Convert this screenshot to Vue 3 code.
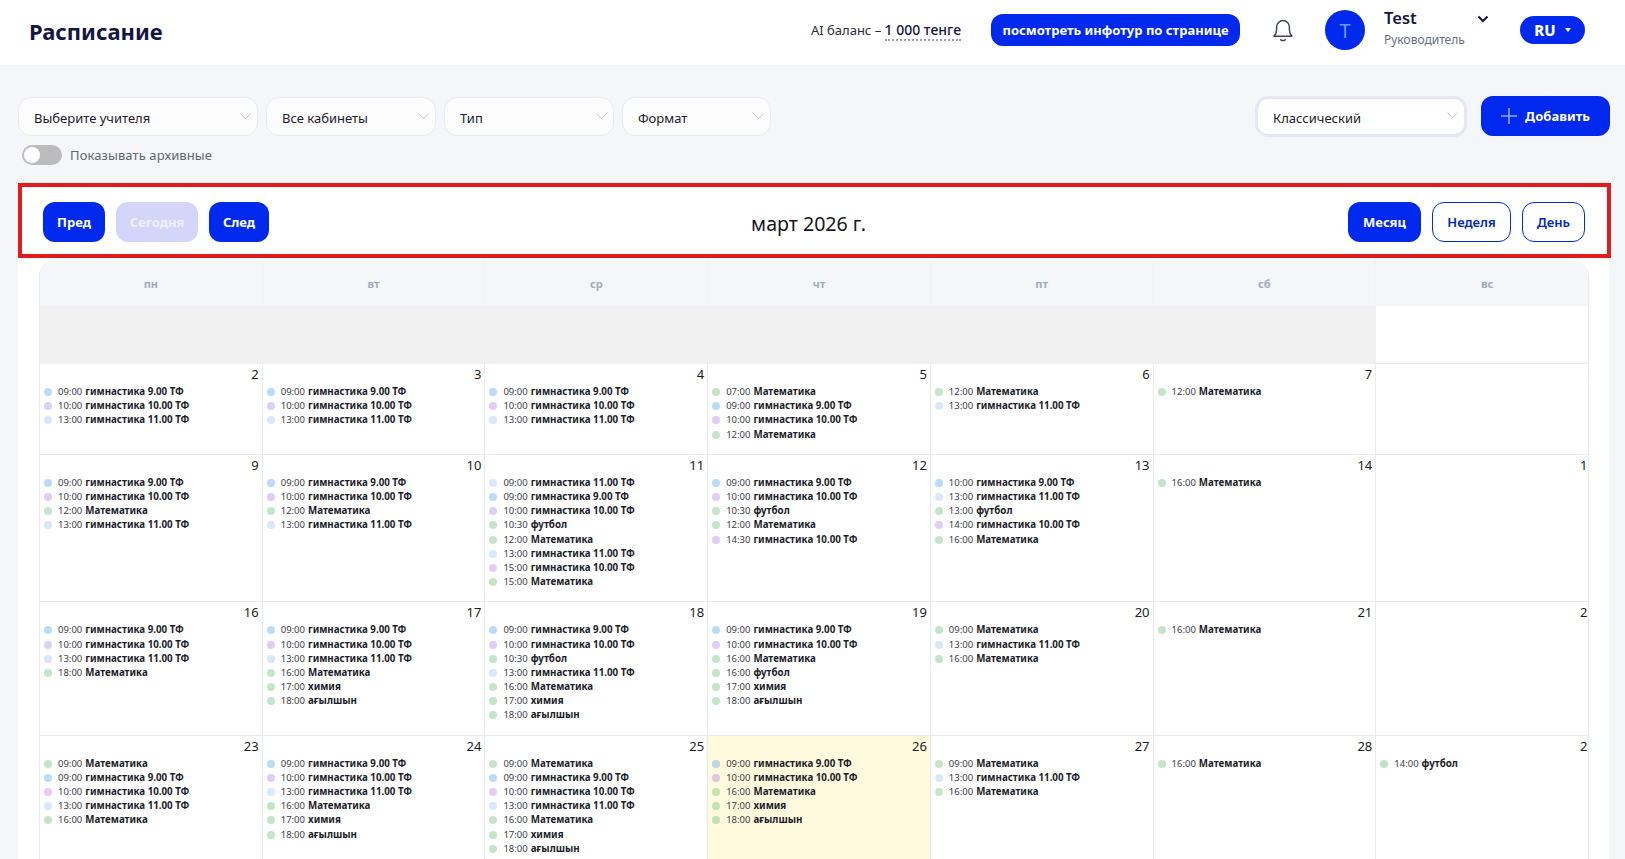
<script setup>
const g9 = ['гимнастика 9.00 ТФ', 'g9']
const g10 = ['гимнастика 10.00 ТФ', 'g10']
const g11 = ['гимнастика 11.00 ТФ', 'g11']
const m = ['Математика', 'gr']
const f = ['футбол', 'gr']
const h = ['химия', 'gr']
const a = ['ағылшын', 'gr']
const ev = (t, e) => ({ time: t, name: e[0], cls: e[1] })
const filters = [
  { label: 'Выберите учителя', cls: 'w1' },
  { label: 'Все кабинеты', cls: 'w2' },
  { label: 'Тип', cls: 'w3' },
  { label: 'Формат', cls: 'w4' }
]
const heads = ['пн', 'вт', 'ср', 'чт', 'пт', 'сб', 'вс']
const base = [ev('09:00', g9), ev('10:00', g10), ev('13:00', g11)]
const cells = [
  ...['', '', '', '', '', ''].map(() => ({ off: true, n: '', e: [] })),
  { n: 1, e: [] },
  { n: 2, e: base }, { n: 3, e: base }, { n: 4, e: base },
  { n: 5, e: [ev('07:00', m), ev('09:00', g9), ev('10:00', g10), ev('12:00', m)] },
  { n: 6, e: [ev('12:00', m), ev('13:00', g11)] },
  { n: 7, e: [ev('12:00', m)] },
  { n: 8, e: [] },
  { n: 9, e: [ev('09:00', g9), ev('10:00', g10), ev('12:00', m), ev('13:00', g11)] },
  { n: 10, e: [ev('09:00', g9), ev('10:00', g10), ev('12:00', m), ev('13:00', g11)] },
  { n: 11, e: [ev('09:00', g11), ev('09:00', g9), ev('10:00', g10), ev('10:30', f), ev('12:00', m), ev('13:00', g11), ev('15:00', g10), ev('15:00', m)] },
  { n: 12, e: [ev('09:00', g9), ev('10:00', g10), ev('10:30', f), ev('12:00', m), ev('14:30', g10)] },
  { n: 13, e: [ev('10:00', g9), ev('13:00', g11), ev('13:00', f), ev('14:00', g10), ev('16:00', m)] },
  { n: 14, e: [ev('16:00', m)] },
  { n: 15, e: [] },
  { n: 16, e: [ev('09:00', g9), ev('10:00', g10), ev('13:00', g11), ev('18:00', m)] },
  { n: 17, e: [ev('09:00', g9), ev('10:00', g10), ev('13:00', g11), ev('16:00', m), ev('17:00', h), ev('18:00', a)] },
  { n: 18, e: [ev('09:00', g9), ev('10:00', g10), ev('10:30', f), ev('13:00', g11), ev('16:00', m), ev('17:00', h), ev('18:00', a)] },
  { n: 19, e: [ev('09:00', g9), ev('10:00', g10), ev('16:00', m), ev('16:00', f), ev('17:00', h), ev('18:00', a)] },
  { n: 20, e: [ev('09:00', m), ev('13:00', g11), ev('16:00', m)] },
  { n: 21, e: [ev('16:00', m)] },
  { n: 22, e: [] },
  { n: 23, e: [ev('09:00', m), ev('09:00', g9), ev('10:00', g10), ev('13:00', g11), ev('16:00', m)] },
  { n: 24, e: [ev('09:00', g9), ev('10:00', g10), ev('13:00', g11), ev('16:00', m), ev('17:00', h), ev('18:00', a)] },
  { n: 25, e: [ev('09:00', m), ev('09:00', g9), ev('10:00', g10), ev('13:00', g11), ev('16:00', m), ev('17:00', h), ev('18:00', a)] },
  { n: 26, today: true, e: [ev('09:00', g9), ev('10:00', g10), ev('16:00', m), ev('17:00', h), ev('18:00', a)] },
  { n: 27, e: [ev('09:00', m), ev('13:00', g11), ev('16:00', m)] },
  { n: 28, e: [ev('16:00', m)] },
  { n: 29, e: [ev('14:00', f)] }
]
</script>

<template>
  <div class="page">
    <header class="top">
      <h1 class="title">Расписание</h1>
      <div class="balance">AI баланс – <span class="sum">1 000 тенге</span></div>
      <button class="tour">посмотреть инфотур по странице</button>
      <svg class="bell" width="22" height="24" viewBox="0 0 22 24" fill="none" stroke="#3f4654" stroke-width="1.5" stroke-linecap="round" stroke-linejoin="round">
        <path d="M2 18.2h18c-1.6-1.6-2.6-3.2-2.6-6.4V9a6.4 6.4 0 0 0-12.8 0v2.8c0 3.2-1 4.8-2.6 6.4Z" />
        <path d="M8.8 21.8c1.3.9 3.1.9 4.4 0" />
      </svg>
      <div class="avatar">T</div>
      <div class="user">
        <div class="uname">Test</div>
        <div class="urole">Руководитель</div>
      </div>
      <svg class="uchev" width="12" height="8" viewBox="0 0 12 8" fill="none" stroke="#14163f" stroke-width="2"><path d="M1.5 1.5 6 6l4.5-4.5" /></svg>
      <button class="lang">RU<span class="caret"></span></button>
    </header>

    <section class="filters">
      <div class="fleft">
        <div class="frow">
          <div v-for="s in filters" :key="s.label" class="sel" :class="s.cls">
            <span>{{ s.label }}</span>
            <svg class="chev" width="11" height="7" viewBox="0 0 11 7" fill="none" stroke="#c4c8d0" stroke-width="1"><path d="M.6.6 5.5 6 10.4.6" /></svg>
          </div>
        </div>
        <div class="arch">
          <span class="toggle"><span class="knob"></span></span>
          <span>Показывать архивные</span>
        </div>
      </div>
      <div class="fright">
        <div class="sel classic">
          <span>Классический</span>
          <svg class="chev" width="11" height="7" viewBox="0 0 11 7" fill="none" stroke="#c4c8d0" stroke-width="1"><path d="M.6.6 5.5 6 10.4.6" /></svg>
        </div>
        <button class="add">
          <svg width="16" height="16" viewBox="0 0 16 16" stroke="#8ea6fb" stroke-width="1.6"><path d="M8 0v16M0 8h16" /></svg>
          Добавить
        </button>
      </div>
    </section>

    <section class="toolbar">
      <div class="tgroup">
        <button class="btn solid b1">Пред</button>
        <button class="btn faded b2">Сегодня</button>
        <button class="btn solid b3">След</button>
      </div>
      <h2 class="month">март 2026 г.</h2>
      <div class="tgroup">
        <button class="btn solid b4">Месяц</button>
        <button class="btn line b5">Неделя</button>
        <button class="btn line b6">День</button>
      </div>
    </section>

    <section class="panel">
      <div class="clip">
        <div class="grid">
          <div v-for="d in heads" :key="d" class="head">{{ d }}</div>
          <div v-for="(c, i) in cells" :key="i" class="cell" :class="{ off: c.off, today: c.today }">
            <div class="num">{{ c.n }}</div>
            <div v-for="(e, j) in c.e" :key="j" class="ev">
              <span class="dot" :class="e.cls"></span>
              <span class="time">{{ e.time }}</span>
              <b class="name">{{ e.name }}</b>
            </div>
          </div>
        </div>
      </div>
    </section>
  </div>
</template>

<style>
html, body { margin: 0; overflow: hidden; }
</style>

<style scoped>
* { box-sizing: border-box; }
.page {
  width: 1625px;
  height: 859px;
  overflow: hidden;
  background: #f4f6f9;
  font-family: "Noto Sans", sans-serif;
  color: #14163f;
}
button { font-family: inherit; border: 0; cursor: pointer; }
.top {
  height: 65px;
  background: #fff;
  display: flex;
  align-items: center;
  padding: 0 40px 5px 29px;
}
.title {
  margin: 2px auto 0 0;
  font-size: 22px;
  font-weight: 700;
  color: #14163f;
}
.balance { font-size: 13px; color: #2b2f3a; margin: -2px 30px 0 0; }
.sum { color: #14163f; font-weight: 500; font-size: 14px; border-bottom: 2px dotted #9aa0ad; }
.tour {
  width: 249px;
  height: 32px;
  border-radius: 12px;
  background: #0029ed;
  color: #fff;
  font-size: 13px;
  font-weight: 700;
  padding: 0;
  margin-right: 32px;
}
.bell { margin-right: 31px; }
.avatar {
  width: 40px;
  height: 40px;
  border-radius: 50%;
  background: #0029ed;
  color: #6f9bff;
  font-size: 20px;
  display: flex;
  align-items: center;
  justify-content: center;
  margin-right: 19px;
}
.user { width: 93px; margin-top: -5px; }
.uname { font-size: 16.5px; font-weight: 600; line-height: 24px; color: #14163f; }
.urole { font-size: 12px; line-height: 18px; color: #6a6f7c; margin-top: 1px; }
.uchev { margin: -22px 31px 0 0; }
.lang {
  width: 65px;
  height: 28px;
  border-radius: 14px;
  background: #0029ed;
  color: #fff;
  font-size: 15px;
  font-weight: 800;
  display: flex;
  align-items: center;
  justify-content: center;
  gap: 9px;
  padding: 0;
}
.caret { border: 3px solid transparent; border-top: 4px solid #fff; border-bottom: 0; }

.filters {
  height: 118px;
  padding: 32px 15px 0 18px;
  display: flex;
  justify-content: space-between;
  align-items: flex-start;
}
.frow { display: flex; gap: 8px; }
.sel {
  position: relative;
  height: 39px;
  border: 1px solid #e9ebef;
  border-radius: 13px;
  background: #fcfcfd;
  font-size: 13px;
  line-height: 40px;
  color: #1e2129;
  padding-left: 15px;
}
.w1 { width: 240px; }
.w2 { width: 170px; }
.w3 { width: 170px; }
.w4 { width: 149px; }
.chev { position: absolute; right: 6px; top: 15px; }
.arch {
  display: flex;
  align-items: center;
  gap: 8px;
  margin: 9px 0 0 4px;
  font-size: 13px;
  letter-spacing: 0.1px;
  color: #5f6672;
}
.toggle {
  width: 40px;
  height: 20px;
  border-radius: 10px;
  background: #bcbcbc;
  padding: 2px;
  display: block;
}
.knob { display: block; width: 16px; height: 16px; border-radius: 50%; background: #fff; }
.fright { display: flex; align-items: flex-start; gap: 14px; }
.classic {
  width: 212px;
  height: 41px;
  border: 3px solid #e5e7f3;
  background: #fff;
  padding-left: 15px;
  line-height: 38px;
  margin-top: -1px;
}
.classic .chev { top: 13px; }
.add {
  width: 129px;
  height: 40px;
  border-radius: 12px;
  background: #0029ed;
  color: #fff;
  font-size: 13px;
  font-weight: 700;
  display: flex;
  align-items: center;
  justify-content: center;
  gap: 8px;
  padding: 0;
  margin-top: -1px;
}

.toolbar {
  width: 1593px;
  height: 75px;
  margin-left: 18px;
  border: 4px solid #e21c1c;
  background: #fff;
  display: flex;
  align-items: center;
  justify-content: space-between;
  padding: 3px 22px 0 21px;
}
.tgroup { display: flex; gap: 11px; }
.btn {
  height: 40px;
  border-radius: 12px;
  font-size: 13px;
  font-weight: 700;
  padding: 0;
}
.solid { background: #0029ed; color: #fff; }
.faded { background: #d3d5f9; color: #eef0ff; }
.line { background: #fff; border: 1px solid #0029ed; color: #0029b8; font-weight: 600; }
.b1 { width: 62px; }
.b2 { width: 82px; }
.b3 { width: 60px; }
.b4 { width: 73px; }
.b5 { width: 79px; }
.b6 { width: 63px; }
.month { margin: 3px 0 0; font-size: 19.6px; font-weight: 400; color: #14161c; }

.panel {
  width: 1591px;
  height: 601px;
  margin-left: 18px;
  background: #fff;
  padding: 2px 20px 0 21px;
}
.clip {
  width: 1550px;
  height: 100%;
  overflow: hidden;
  border-radius: 16px 16px 0 0;
  border-left: 1px solid #e8ebef;
  border-right: 1px solid #e8ebef;
}
.grid {
  width: 1559px;
  display: grid;
  grid-template-columns: repeat(7, 1fr);
}
.head {
  height: 46px;
  background: #f4f6f9;
  border-right: 1px solid #f0f2f5;
  font-size: 11px;
  font-weight: 700;
  color: #a1abc0;
  text-align: center;
  line-height: 48px;
}
.cell {
  min-height: 58px;
  padding: 0 0 12px 4px;
  border-right: 1px solid #e8ebef;
  border-bottom: 1px solid #e8ebef;
}
.off { background: #f0f0f0; border-color: #f0f0f0; }
.today { background: #fff9dd; }
.num {
  height: 21px;
  font-size: 13px;
  line-height: 21px;
  text-align: right;
  padding-right: 3px;
  color: #1b1d23;
}
.ev {
  height: 14.2px;
  display: flex;
  align-items: center;
  line-height: 14px;
  white-space: nowrap;
  color: #1b1d23;
}
.dot { width: 8px; height: 8px; border-radius: 50%; margin-right: 6px; flex: none; }
.g9 { background: rgba(33, 136, 229, 0.3); }
.g10 { background: rgba(150, 90, 225, 0.3); }
.g11 { background: rgba(120, 170, 240, 0.27); }
.gr { background: rgba(60, 170, 80, 0.3); }
.time { font-size: 9.5px; color: #3c4048; margin-right: 3px; }
.name { font-size: 9.75px; font-weight: 700; color: #1b1d29; }
</style>
